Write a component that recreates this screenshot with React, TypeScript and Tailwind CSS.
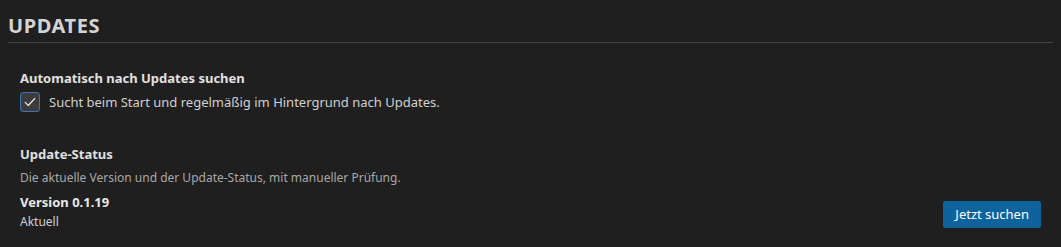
export default function App() {
  return (
    <div className="h-[247px] w-full bg-[#1f1f1f] px-2 pt-[13px] text-[#cccccc]" style={{ fontFamily: '"Noto Sans", sans-serif' }}>
      {/* Section header */}
      <h2 className="border-b border-[#454545] pb-[3px] text-[20px] font-bold leading-[26px] tracking-[0.03em] text-[#d4d4d4]">
        UPDATES
      </h2>

      <div className="px-3">
        {/* Auto update */}
        <div className="mt-[26px]">
          <div className="text-[13px] font-bold leading-[18px] text-[#e0e0e0]">Automatisch nach Updates suchen</div>
          <label className="mt-[5px] flex items-center gap-[9px]">
            <span className="flex h-[20px] w-[20px] items-center justify-center rounded-[3px] border border-[#3f75b0] bg-[#3c3c3c]">
              <svg viewBox="0 0 16 16" className="h-[14px] w-[14px]" fill="none" stroke="#e8e8e8" strokeWidth="1.3" strokeLinecap="round" strokeLinejoin="round">
                <path d="M2.5 8.5l3.5 3.5 7.5-8" />
              </svg>
            </span>
            <span className="text-[13px] leading-[18px] text-[#d0d0d0]">Sucht beim Start und regelmäßig im Hintergrund nach Updates.</span>
          </label>
        </div>

        {/* Update status */}
        <div className="mt-[33px]">
          <div className="text-[13px] font-bold leading-[18px] text-[#e0e0e0]">Update-Status</div>
          <div className="mt-[7px] text-[12px] leading-[16px] text-[#a8a8a8]">
            Die aktuelle Version und der Update-Status, mit manueller Prüfung.
          </div>
          <div className="mt-[7px] flex items-end justify-between">
            <div>
              <div className="text-[13px] font-bold leading-[18px] text-[#e8e8e8]">Version 0.1.19</div>
              <div className="mt-[3px] text-[12px] leading-[16px] text-[#d0d0d0]">Aktuell</div>
            </div>
            <button className="mb-[2px] rounded-[2px] bg-[#0e639c] px-3 py-[5px] text-[13px] leading-[17px] text-white">
              Jetzt suchen
            </button>
          </div>
        </div>
      </div>
    </div>
  )
}
